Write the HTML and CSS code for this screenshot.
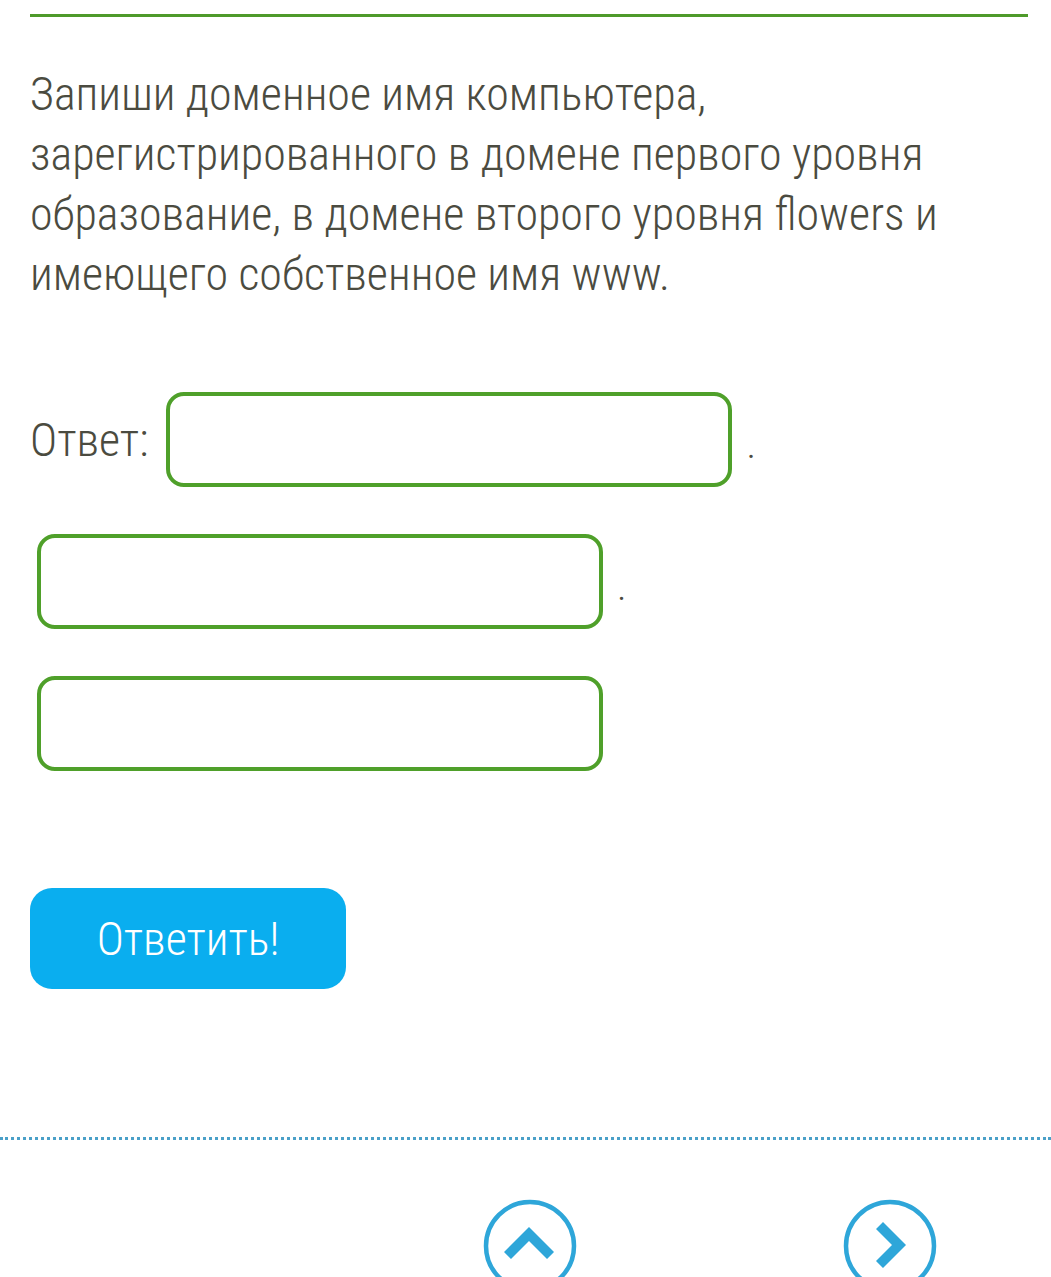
FILE: index.html
```html
<!DOCTYPE html>
<html>
    <head>
        <meta charset="utf-8" />
        <title>Доменное имя</title>
        <link rel="stylesheet" href="styles.css">
    </head>

    <body>
        <div class="m-task">
            <div class="line"></div>

            <p class="question">Запиши доменное имя компьютера, зарегистрированного в домене первого уровня образование, в домене второго уровня flowers и имеющего собственное имя www.</p>

            <div class="answer">
                <div class="row first">
                    <span class="label">Ответ:</span>
                    <input class="field" type="text" />
                    <span class="dot">.</span>
                </div>
                <div class="row">
                    <input class="field" type="text" />
                    <span class="dot">.</span>
                </div>
                <div class="row">
                    <input class="field" type="text" />
                </div>
            </div>

            <button class="btn" type="button">Ответить!</button>
        </div>

        <div class="m-nav">
            <a class="circle up" href="#">
                <svg width="98" height="98" viewBox="0 0 98 98">
                    <circle cx="49" cy="49" r="44" fill="none" stroke="#2ea6d9" stroke-width="4.5" />
                    <path d="M48 30 L73 55 L66 62 L48 44 L30 62 L23 55 Z" fill="#2ea6d9" />
                </svg>
            </a>
            <a class="circle next" href="#">
                <svg width="98" height="98" viewBox="0 0 98 98">
                    <circle cx="49" cy="49" r="44" fill="none" stroke="#2ea6d9" stroke-width="4.5" />
                    <path d="M35 32 L42 25 L65 48 L42 71 L35 64 L51 48 Z" fill="#2ea6d9" />
                </svg>
            </a>
        </div>
    </body>
</html>
```

FILE: styles.css
```css
*{margin:0;padding:0;box-sizing:border-box;}
html,body{background:#fff;}
body{font-family:"Roboto Condensed","Liberation Sans Narrow",Roboto,sans-serif;font-stretch:75%;color:#4b4b40;overflow:hidden;}

.m-task{padding:0 23px 0 30px;}
.m-task .line{height:3px;margin-top:14px;background:#4e9a2a;}
.m-task .question{margin-top:47px;font-size:46px;line-height:60px;font-weight:300;}

.answer{margin-top:88px;}
.answer .row{display:flex;align-items:center;gap:14px;margin-bottom:47px;padding-left:7px;}
.answer .row.first{padding-left:0;gap:22px;}
.answer .row.first .dot{margin-left:-8px;}
.answer .label{font-size:46px;font-weight:300;margin-right:-4px;}
.answer .field{width:566px;height:95px;border:4px solid #4fa02a;border-radius:18px;background:#fff;outline:none;}
.answer .dot{font-size:40px;font-weight:300;padding-top:10px;}

.btn{display:block;margin-top:117px;width:316px;height:101px;border:0;border-radius:22px;background:#0aaeef;color:#fff;font-family:inherit;font-stretch:75%;font-size:46px;font-weight:300;}

.m-nav{margin-top:148px;border-top:3px dotted #4aa0c8;height:200px;position:relative;}
.m-nav .circle{position:absolute;top:57px;}
.m-nav .up{left:481px;}
.m-nav .next{left:841px;}
```
